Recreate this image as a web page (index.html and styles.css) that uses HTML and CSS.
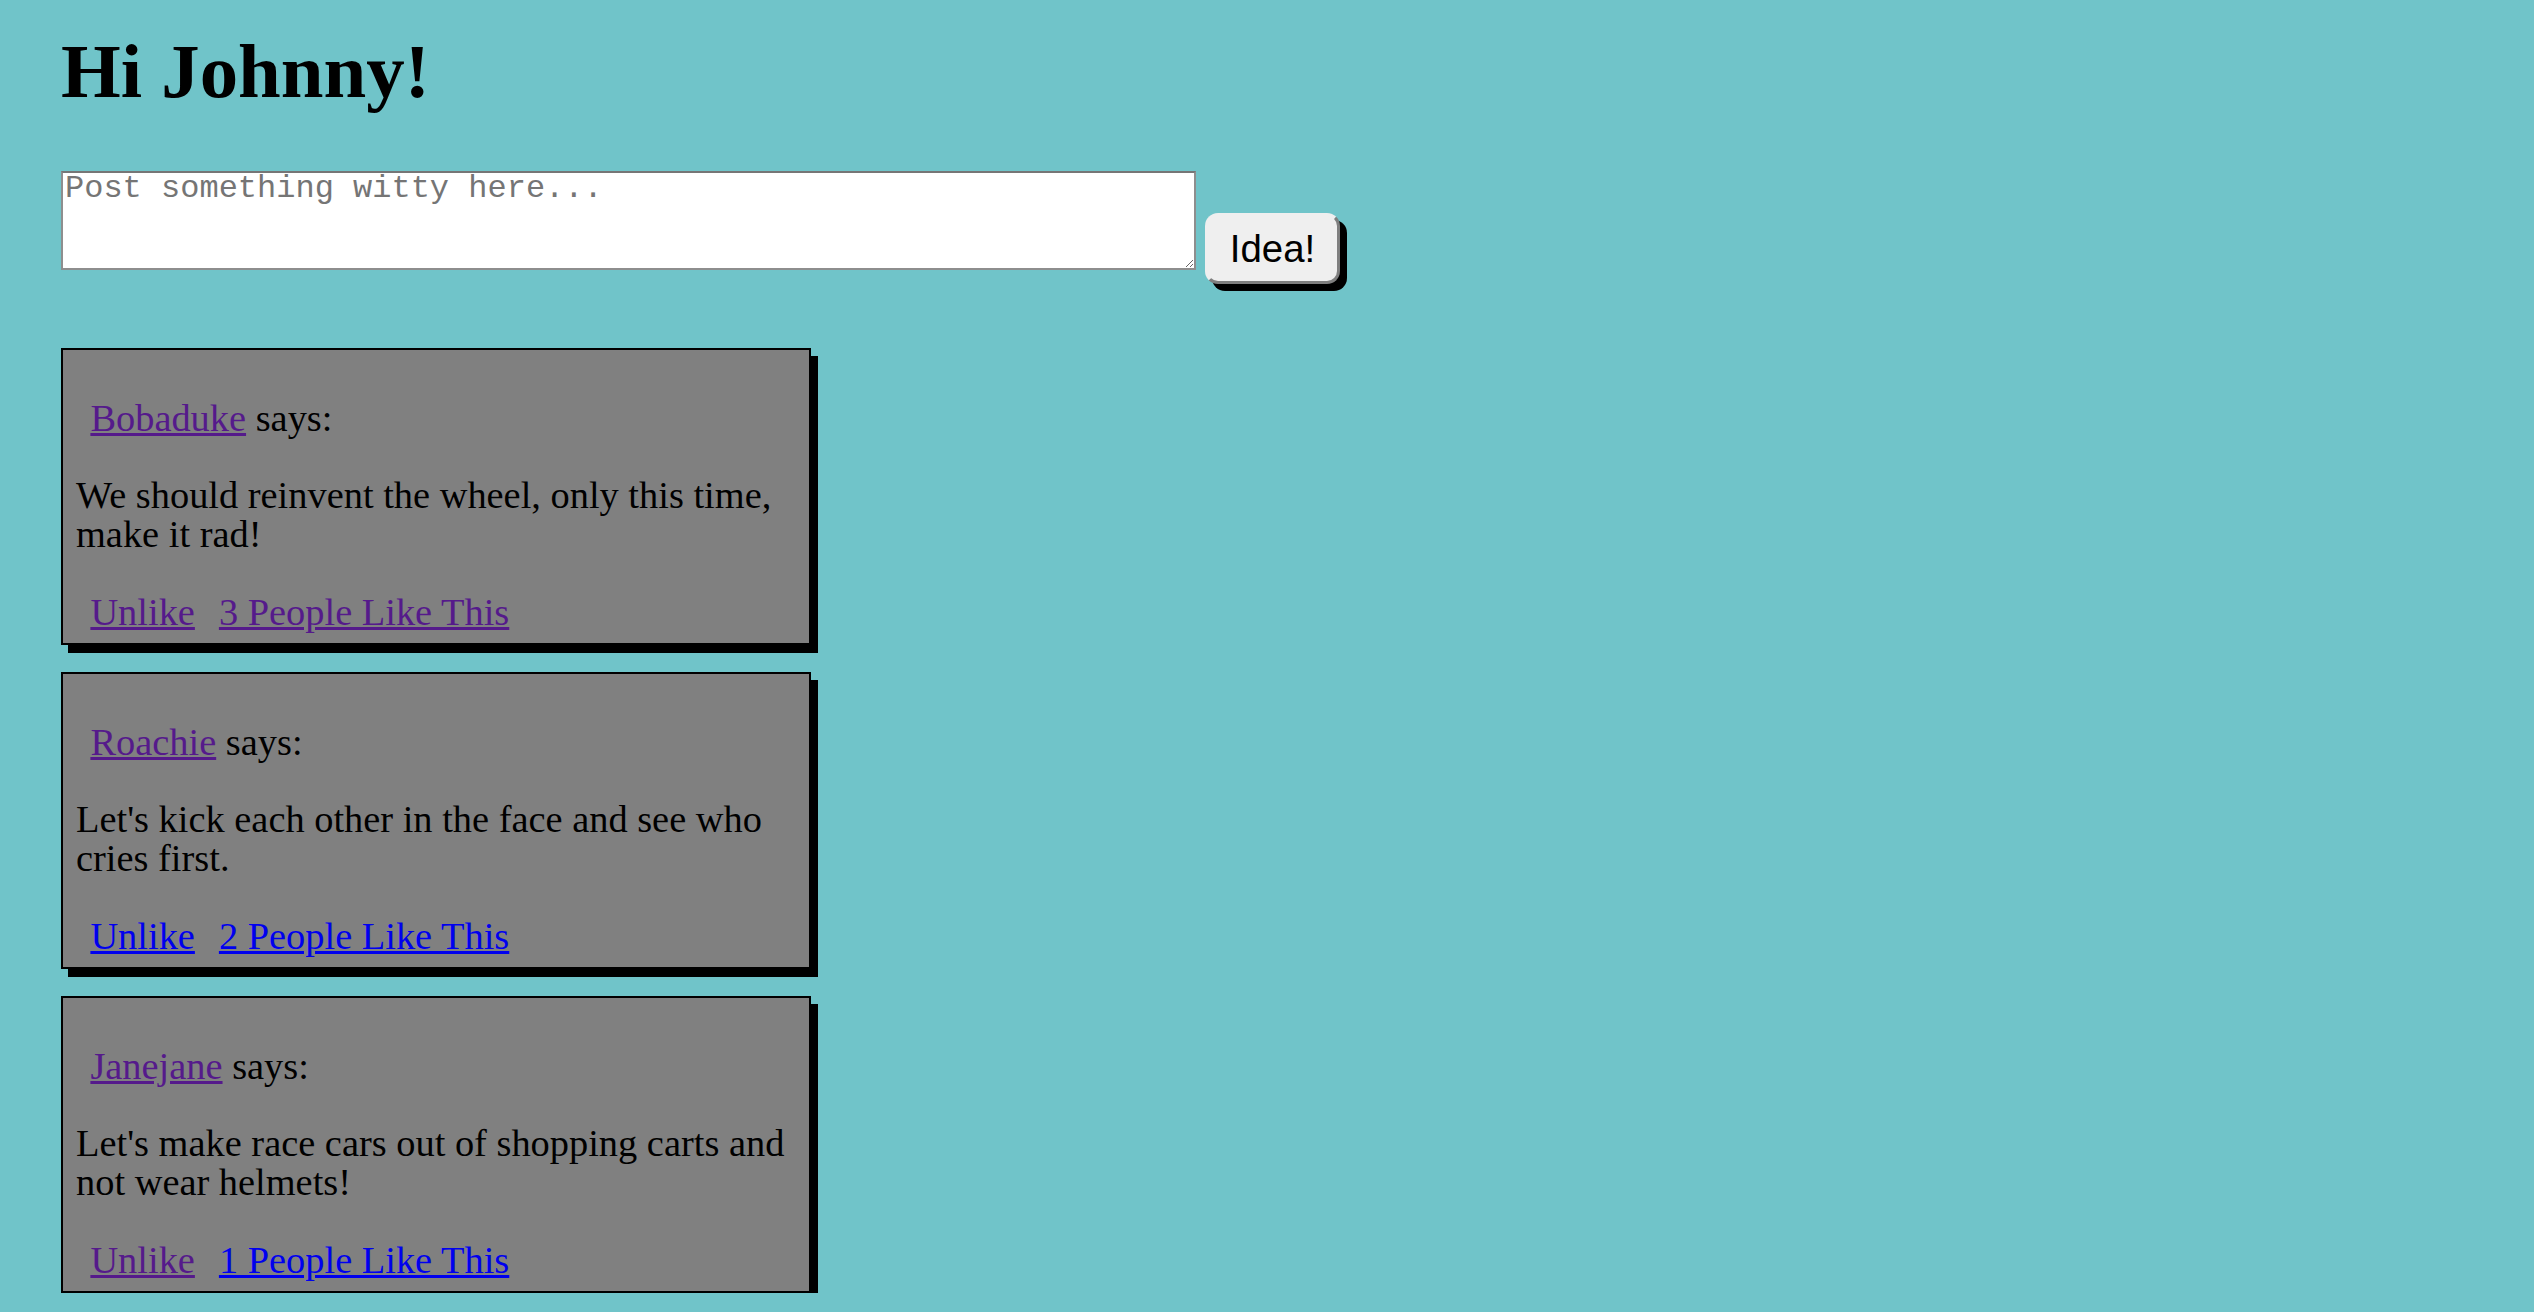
FILE: index.html
```html
<!DOCTYPE html>
<html>
<head>
<meta charset="utf-8">
<title>Ideas</title>
<link rel="stylesheet" href="styles.css">
</head>
<body>
<div class="page">
  <h1 class="greeting">Hi Johnny!</h1>
  <form class="composer">
    <textarea class="composer-input" placeholder="Post something witty here..."></textarea>
    <button type="button" class="composer-btn">Idea!</button>
  </form>
  <div class="feed">
    <div class="card">
      <p class="author"><a class="link visited" href="#">Bobaduke</a> says:</p>
      <p class="body">We should reinvent the wheel, only this time, make it rad!</p>
      <p class="actions"><a class="link visited" href="#">Unlike</a> <a class="link visited" href="#">3 People Like This</a></p>
    </div>
    <div class="card">
      <p class="author"><a class="link visited" href="#">Roachie</a> says:</p>
      <p class="body">Let's kick each other in the face and see who cries first.</p>
      <p class="actions"><a class="link" href="#">Unlike</a> <a class="link" href="#">2 People Like This</a></p>
    </div>
    <div class="card">
      <p class="author"><a class="link visited" href="#">Janejane</a> says:</p>
      <p class="body">Let's make race cars out of shopping carts and not wear helmets!</p>
      <p class="actions"><a class="link visited" href="#">Unlike</a> <a class="link" href="#">1 People Like This</a></p>
    </div>
  </div>
</div>
</body>
</html>
```

FILE: styles.css
```css
html, body {
  margin: 0;
  padding: 0;
}

body {
  background: #70c4c9;
  font-family: "Liberation Serif", "Times New Roman", serif;
  font-size: 38.4px;
  line-height: 39px;
  color: #000;
}

.page {
  padding: 0 61px;
}

.greeting {
  font-size: 76.8px;
  font-weight: bold;
  line-height: 88px;
  margin: 28px 0 0;
}

.composer {
  display: flex;
  align-items: flex-start;
  margin: 55px 0 0;
}

.composer-input {
  box-sizing: border-box;
  width: 1135px;
  height: 99px;
  margin: 0;
  padding: 1px 2px 0;
  border: 2px solid #8e8e8e;
  border-top-color: #767676;
  background: #fff;
  font-family: "Liberation Mono", "Courier New", monospace;
  font-size: 32px;
  line-height: 29px;
  resize: both;
}

.composer-input::placeholder {
  color: #757575;
}

.composer-btn {
  box-sizing: border-box;
  width: 135px;
  height: 71px;
  margin: 42px 0 0 9px;
  padding: 0;
  border: 3px solid;
  border-color: #efefef #7f7f7f #7f7f7f #efefef;
  border-radius: 13px;
  background: #efefef;
  box-shadow: 7px 7px 0 #000;
  font-family: "Liberation Sans", Arial, Helvetica, sans-serif;
  font-size: 38.4px;
  line-height: 44px;
  color: #000;
  text-align: center;
}

.feed {
  display: flex;
  flex-direction: column;
  gap: 27px;
  margin-top: 64px;
}

.card {
  box-sizing: border-box;
  width: 750px;
  height: 297px;
  padding: 10.5px 13px 11.5px;
  border: 2px solid #000;
  background: #808080;
  box-shadow: 7px 8px 0 #000;
}

.author {
  margin: 38px 0 0;
}

.body {
  margin: 38px 0 0;
}

.actions {
  margin: 39px 0 0;
}

.link {
  color: #0000ee;
  margin-left: 14.4px;
}

.link.visited {
  color: #551a8b;
}
```
